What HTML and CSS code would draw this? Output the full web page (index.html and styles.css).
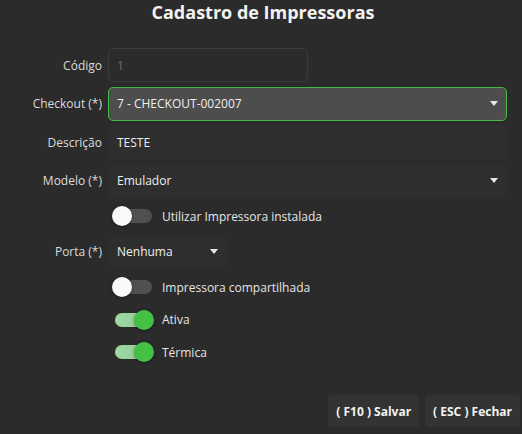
FILE: index.html
```html
<!DOCTYPE html>
<html lang="pt-BR">
<head>
  <meta charset="UTF-8">
  <meta name="viewport" content="width=device-width, initial-scale=1.0">
  <title>Cadastro de Impressoras</title>
  <link rel="stylesheet" href="styles.css">
</head>
<body>

  <header class="titulo">Cadastro de Impressoras</header>

  <form class="form">
    <label class="rotulo">Código</label>
    <div class="campo campo-codigo desabilitado">1</div>

    <label class="rotulo">Checkout (*)</label>
    <div class="campo campo-select ativo">
      <span>7 - CHECKOUT-002007</span>
      <span class="seta"></span>
    </div>

    <label class="rotulo">Descrição</label>
    <div class="campo">TESTE</div>

    <label class="rotulo">Modelo (*)</label>
    <div class="campo campo-select">
      <span>Emulador</span>
      <span class="seta"></span>
    </div>

    <div class="switch-linha">
      <span class="switch"><span class="bola"></span></span>
      <span>Utilizar Impressora instalada</span>
    </div>

    <label class="rotulo">Porta (*)</label>
    <div class="campo campo-select campo-porta">
      <span>Nenhuma</span>
      <span class="seta"></span>
    </div>

    <div class="switch-linha">
      <span class="switch"><span class="bola"></span></span>
      <span>Impressora compartilhada</span>
    </div>

    <div class="switch-linha">
      <span class="switch ligado"><span class="bola"></span></span>
      <span>Ativa</span>
    </div>

    <div class="switch-linha">
      <span class="switch ligado"><span class="bola"></span></span>
      <span>Térmica</span>
    </div>
  </form>

  <footer class="acoes">
    <button class="botao">( F10 ) Salvar</button>
    <button class="botao">( ESC ) Fechar</button>
  </footer>

</body>
</html>
```

FILE: styles.css
```css
* {
  box-sizing: border-box;
  margin: 0;
  padding: 0;
}
body {
  width: 522px;
  height: 434px;
  font-family: "Open Sans", "Noto Sans", sans-serif;
  font-size: 12px;
  background-color: #2b2b2b;
  color: #e6e6e6;
  display: flex;
  flex-direction: column;
  overflow: hidden;
}
.titulo {
  height: 48px;
  line-height: 25px;
  text-align: center;
  font-size: 18px;
  font-weight: bold;
  color: #f2f2f2;
  padding-left: 4px;
}
.form {
  display: grid;
  grid-template-columns: 102px 399px;
  column-gap: 6px;
  row-gap: 4.5px;
  align-items: center;
}
.rotulo {
  text-align: right;
  color: #dcdcdc;
}
.campo {
  height: 34px;
  display: flex;
  align-items: center;
  justify-content: space-between;
  padding: 0 8px;
  border: 1px solid #2f2f2f;
  border-radius: 5px;
  background-color: #2e2e2e;
  color: #efefef;
}
.campo-codigo {
  width: 200px;
  background-color: #2b2b2b;
  border-color: #3c3c3c;
}
.desabilitado {
  color: #6e6e6e;
}
.campo-select.ativo {
  background-color: #4d4d4d;
  border-color: #44b944;
}
.campo-porta {
  width: 119px;
}
.seta {
  width: 0;
  height: 0;
  border-left: 4px solid transparent;
  border-right: 4px solid transparent;
  border-top: 5px solid #e8e8e8;
}
.switch-linha {
  grid-column: 2;
  height: 28px;
  display: flex;
  align-items: center;
  gap: 8px;
  padding-left: 4px;
  color: #e6e6e6;
}
.switch {
  position: relative;
  width: 42px;
  height: 20px;
  display: flex;
  align-items: center;
}
.switch::before {
  content: "";
  margin-left: 3px;
  width: 37px;
  height: 14px;
  border-radius: 7px;
  background-color: #505050;
}
.switch .bola {
  position: absolute;
  left: 0;
  top: 0;
  width: 20px;
  height: 20px;
  border-radius: 50%;
  background-color: #fafafa;
  box-shadow: 0 1px 3px rgba(0, 0, 0, 0.4);
}
.switch.ligado::before {
  background: linear-gradient(to right, #a3d9a6, #86c98a);
}
.switch.ligado .bola {
  left: 22px;
  background-color: #43c046;
}
.acoes {
  margin-top: auto;
  margin-bottom: 7px;
  display: flex;
  justify-content: flex-end;
  gap: 6px;
  padding-right: 2px;
}
.botao {
  height: 32px;
  padding: 0 8px;
  border: none;
  border-radius: 4px;
  background-color: #333333;
  color: #f2f2f2;
  font-family: "Open Sans", "Noto Sans", sans-serif;
  font-size: 12px;
  font-weight: bold;
}
```
